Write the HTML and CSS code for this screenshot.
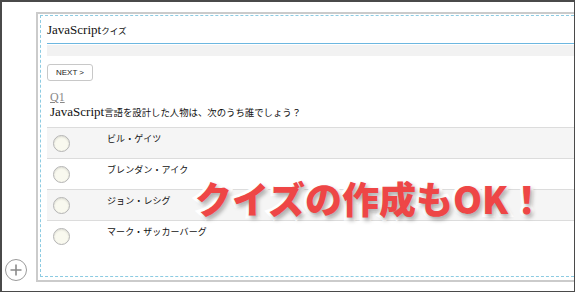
FILE: index.html
```html
<!DOCTYPE html>
<html>
<head>
  <title>JavaScriptクイズ</title>
  <link rel="stylesheet" href="styles.css">
</head>
<body>

<div class="frame">
  <div class="panel">
    <div class="block">
      <div class="quiz-title"><span class="en">JavaScript</span><span class="ja-small">クイズ</span></div>
      <div class="band"></div>

      <button class="next-btn">NEXT &gt;</button>

      <div class="q-head">
        <div class="q-num">Q1</div>
        <div class="q-text"><span class="en">JavaScript</span><span class="ja">言語を設計した人物は、次のうち誰でしょう？</span></div>
      </div>

      <div class="choices">
        <div class="choice shaded"><span class="radio"></span><span class="label">ビル・ゲイツ</span></div>
        <div class="choice"><span class="radio"></span><span class="label">ブレンダン・アイク</span></div>
        <div class="choice shaded"><span class="radio"></span><span class="label">ジョン・レシグ</span></div>
        <div class="choice"><span class="radio"></span><span class="label">マーク・ザッカーバーグ</span></div>
      </div>
    </div>
  </div>

  <div class="add-btn">
    <svg width="22" height="22" viewBox="0 0 22 22">
      <circle cx="11" cy="11" r="10.5" fill="#fff" stroke="#9a9a9a" stroke-width="1"/>
      <path d="M11 5.5v11M5.5 11h11" stroke="#8a8a8a" stroke-width="1.6"/>
    </svg>
  </div>

  <div class="caption">クイズの作成もOK！</div>
</div>

</body>
</html>
```

FILE: styles.css
```css
body {
  margin: 0;
  background-color: #fff;
  font-family: "Liberation Serif", "Noto Sans CJK JP", serif;
  color: #222;
}

.frame {
  position: relative;
  width: 575px;
  height: 292px;
  box-sizing: border-box;
  border: 2px solid #4a4a4a;
  border-right-width: 1px;
  border-bottom-width: 1px;
  padding: 10px 0 0 34px;
  overflow: hidden;
}

.panel {
  height: 270px;
  box-sizing: border-box;
  border: 2px solid #cbcbcb;
  border-right: none;
  padding: 1px 0 3px 2px;
}

.block {
  height: 100%;
  box-sizing: border-box;
  border: 1px dashed #8ccbe2;
  border-right: none;
  padding: 0 0 0 6px;
}

.quiz-title {
  height: 27px;
  line-height: 27px;
  border-bottom: 1px solid #6db7e0;
  font-size: 13px;
  color: #111;
}

.ja-small {
  font-family: "Noto Sans CJK JP", sans-serif;
  font-size: 8.5px;
}

.band {
  height: 11px;
  margin-top: 1px;
  background-color: #f2f2f2;
}

.next-btn {
  display: block;
  margin-top: 8px;
  height: 17px;
  width: 46px;
  padding: 0;
  background-color: #fff;
  border: 1px solid #c8c8c8;
  border-radius: 3px;
  font-family: "Liberation Sans", sans-serif;
  font-size: 8px;
  color: #222;
}

.q-head {
  margin: 10px 0 0 3px;
}

.q-num {
  font-size: 12px;
  line-height: 13px;
  color: #888;
  text-decoration: underline;
}

.q-text {
  font-size: 13px;
  line-height: 15px;
  color: #111;
}

.ja {
  font-family: "Noto Sans CJK JP", sans-serif;
  font-size: 9.4px;
}

.choices {
  margin-top: 7px;
}

.choice {
  display: flex;
  align-items: flex-start;
  height: 31px;
  box-sizing: border-box;
  border-top: 1px solid #dcdcdc;
  padding-top: 5px;
}

.choice.shaded {
  background-color: #f5f5f5;
}

.radio {
  width: 15px;
  height: 15px;
  margin: 2px 0 0 6px;
  border: 1px solid #b4b4b4;
  border-radius: 50%;
  background-color: #f9f9ef;
  box-shadow: inset 0 1px 2px rgba(0, 0, 0, 0.12);
}

.label {
  margin-left: 37px;
  font-family: "Noto Sans CJK JP", sans-serif;
  font-size: 9px;
  line-height: 12px;
  letter-spacing: 0.1px;
  color: #111;
}

.add-btn {
  position: absolute;
  left: 3px;
  top: 257px;
  width: 22px;
  height: 22px;
}

.caption {
  position: absolute;
  left: 193px;
  top: 176px;
  font-family: "Noto Sans CJK JP", sans-serif;
  font-weight: 900;
  font-size: 37px;
  line-height: 40px;
  color: #ee4646;
  -webkit-text-stroke: 6px #fff;
  paint-order: stroke fill;
  text-shadow: 2px 3px 4px rgba(0, 0, 0, 0.35);
  white-space: nowrap;
}
```
